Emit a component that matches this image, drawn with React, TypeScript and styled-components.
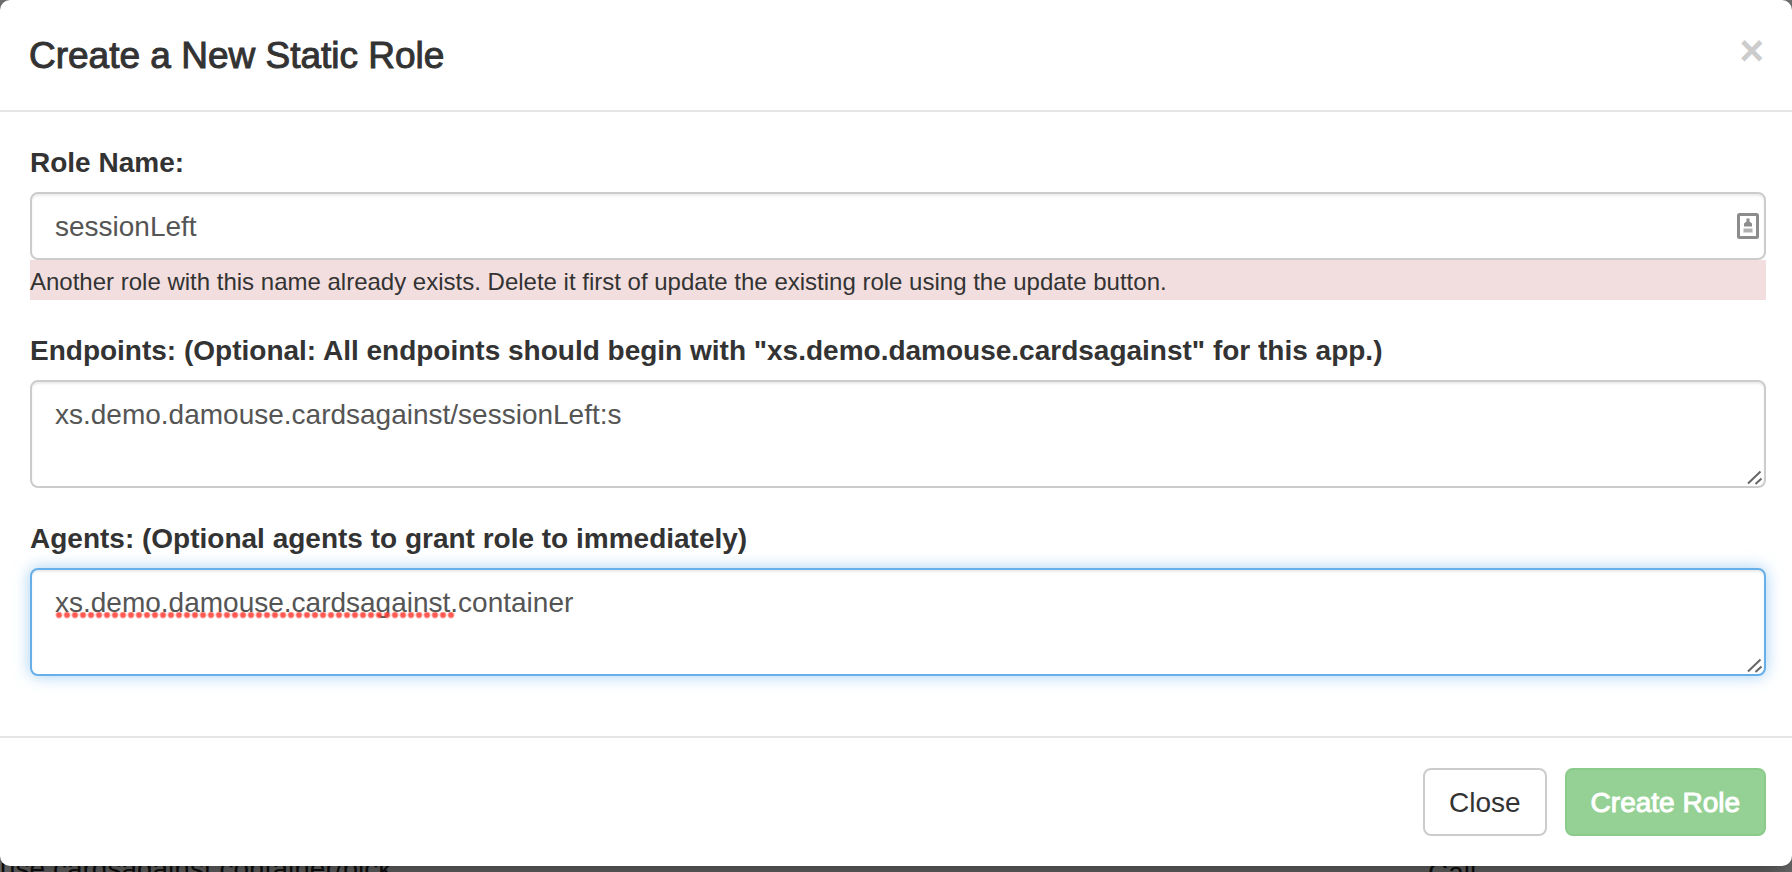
import React from "react";
import styled, { createGlobalStyle } from "styled-components";

const GlobalStyle = createGlobalStyle`
  *, *::before, *::after { box-sizing: border-box; }
  body {
    margin: 0;
    background: #757575;
    color: #333;
    font: 28px/40px "Liberation Sans", Arial, sans-serif;
  }
`;

const Page = styled.div`
  height: 100vh;
  overflow: hidden;
`;

const Modal = styled.div`
  position: relative;
  z-index: 1;
  background: #fff;
  border-radius: 10px;
  box-shadow: 0 10px 30px rgba(0, 0, 0, 0.5);
`;

const Header = styled.header`
  display: flex;
  justify-content: space-between;
  align-items: flex-start;
  padding: 30px 28px 28px 29px;
  border-bottom: 2px solid #e5e5e5;
`;

const Title = styled.h1`
  margin: 0;
  font-size: 37px;
  font-weight: 400;
  line-height: 52px;
  -webkit-text-stroke: 1px #333;
`;

const Dismiss = styled.button`
  padding: 0;
  border: 0;
  background: none;
  color: #ccc;
  font: bold 42px/42px "Liberation Sans", Arial, sans-serif;
  cursor: pointer;
`;

const Body = styled.div`
  padding: 30px 26px 30px 30px;
`;

const Group = styled.div`
  margin-bottom: 30px;
`;

const Label = styled.label`
  display: block;
  margin-bottom: 8px;
  font-weight: 700;
  line-height: 42px;
`;

const Field = styled.div`
  position: relative;
`;

const controlStyle = `
  display: block;
  width: 100%;
  padding: 13px 23px 11px;
  border: 2px solid #ccc;
  border-radius: 8px;
  background: #fff;
  box-shadow: inset 0 2px 2px rgba(0, 0, 0, 0.075);
  color: #555;
  font: inherit;
  outline: 0;
`;

const TextInput = styled.input`
  ${controlStyle}
  height: 68px;
`;

const TextArea = styled.textarea<{ $active?: boolean }>`
  ${controlStyle}
  height: 108px;
  resize: vertical;
  &::-webkit-resizer { display: none; }
  ${(p) =>
    p.$active &&
    `
    border-color: #66afe9;
    box-shadow: inset 0 2px 2px rgba(0, 0, 0, 0.075), 0 0 16px rgba(102, 175, 233, 0.6);
  `}
`;

const FillIcon = styled.svg`
  position: absolute;
  top: 20px;
  right: 6px;
`;

const Grip = styled.svg`
  position: absolute;
  right: 3px;
  bottom: 3px;
  pointer-events: none;
`;

const Misspelling = styled.span`
  position: absolute;
  top: 44px;
  left: 25px;
  width: 400px;
  height: 7px;
  background: radial-gradient(circle at 4px 3px, rgba(255, 60, 50, 0.85) 2px, rgba(255, 60, 50, 0) 4px) 0 0 / 8px 7px;
  pointer-events: none;
`;

const ErrorNote = styled.div`
  padding-top: 4px;
  background: #f2dede;
  font-size: 24px;
  line-height: 36px;
`;

const Footer = styled.footer`
  display: flex;
  justify-content: flex-end;
  gap: 18px;
  padding: 30px 26px;
  border-top: 2px solid #e5e5e5;
`;

const Button = styled.button<{ $primary?: boolean }>`
  height: 68px;
  padding: 13px 24px 11px;
  border: 2px solid ${(p) => (p.$primary ? "#8acb8a" : "#ccc")};
  border-radius: 8px;
  background: ${(p) => (p.$primary ? "#95d195" : "#fff")};
  color: ${(p) => (p.$primary ? "#fff" : "#333")};
  font: inherit;
  ${(p) => p.$primary && "-webkit-text-stroke: 1px #fff;"}
`;

const BackgroundRow = styled.div`
  display: grid;
  grid-template-columns: 1428fr 364fr;
  margin-top: -13px;
  color: #111;
  white-space: nowrap;
`;

const BackgroundName = styled.span`
  line-height: 32px;
`;

const ResizeGrip = () => (
  <Grip width="16" height="16" viewBox="0 0 16 16" fill="none" stroke="#666" strokeWidth="2" aria-hidden="true">
    <path d="M1 14.5 13.500 2.500M8.500 15 14.500 9.500" />
  </Grip>
);

export default function App() {
  return (
    <Page>
      <GlobalStyle />
      <Modal role="dialog" aria-labelledby="dialog-title">
        <Header>
          <Title id="dialog-title">Create a New Static Role</Title>
          <Dismiss type="button" aria-label="Dismiss">×</Dismiss>
        </Header>
        <Body>
          <Group>
            <Label htmlFor="role">Role Name:</Label>
            <Field>
              <TextInput id="role" type="text" defaultValue="sessionLeft" />
              <FillIcon width="24" height="28" viewBox="0 0 24 28" aria-hidden="true">
                <rect x="2.500" y="2.500" width="19" height="23" rx="1" fill="#fff" stroke="#8c8c8c" strokeWidth="3" />
                <path d="M10.500 6.500h3v3l2.500 2v3H8v-3l2.500-2z" fill="#8c8c8c" />
                <path d="M7.500 16.500h9v4h-9z" fill="#b0b0b0" />
              </FillIcon>
            </Field>
            <ErrorNote role="alert">
              Another role with this name already exists. Delete it first of update the existing role using the update button.
            </ErrorNote>
          </Group>
          <Group>
            <Label htmlFor="endpoints">
              Endpoints: (Optional: All endpoints should begin with "xs.demo.damouse.cardsagainst" for this app.)
            </Label>
            <Field>
              <TextArea id="endpoints" spellCheck={false} defaultValue="xs.demo.damouse.cardsagainst/sessionLeft:s" />
              <ResizeGrip />
            </Field>
          </Group>
          <Group>
            <Label htmlFor="agents">Agents: (Optional agents to grant role to immediately)</Label>
            <Field>
              <TextArea id="agents" $active spellCheck={false} defaultValue="xs.demo.damouse.cardsagainst.container" />
              <Misspelling />
              <ResizeGrip />
            </Field>
          </Group>
        </Body>
        <Footer>
          <Button type="button">Close</Button>
          <Button type="button" $primary>Create Role</Button>
        </Footer>
      </Modal>
      <BackgroundRow aria-hidden="true">
        <BackgroundName>use.cardsagainst.container/pick</BackgroundName>
        <span>Call</span>
      </BackgroundRow>
    </Page>
  );
}
